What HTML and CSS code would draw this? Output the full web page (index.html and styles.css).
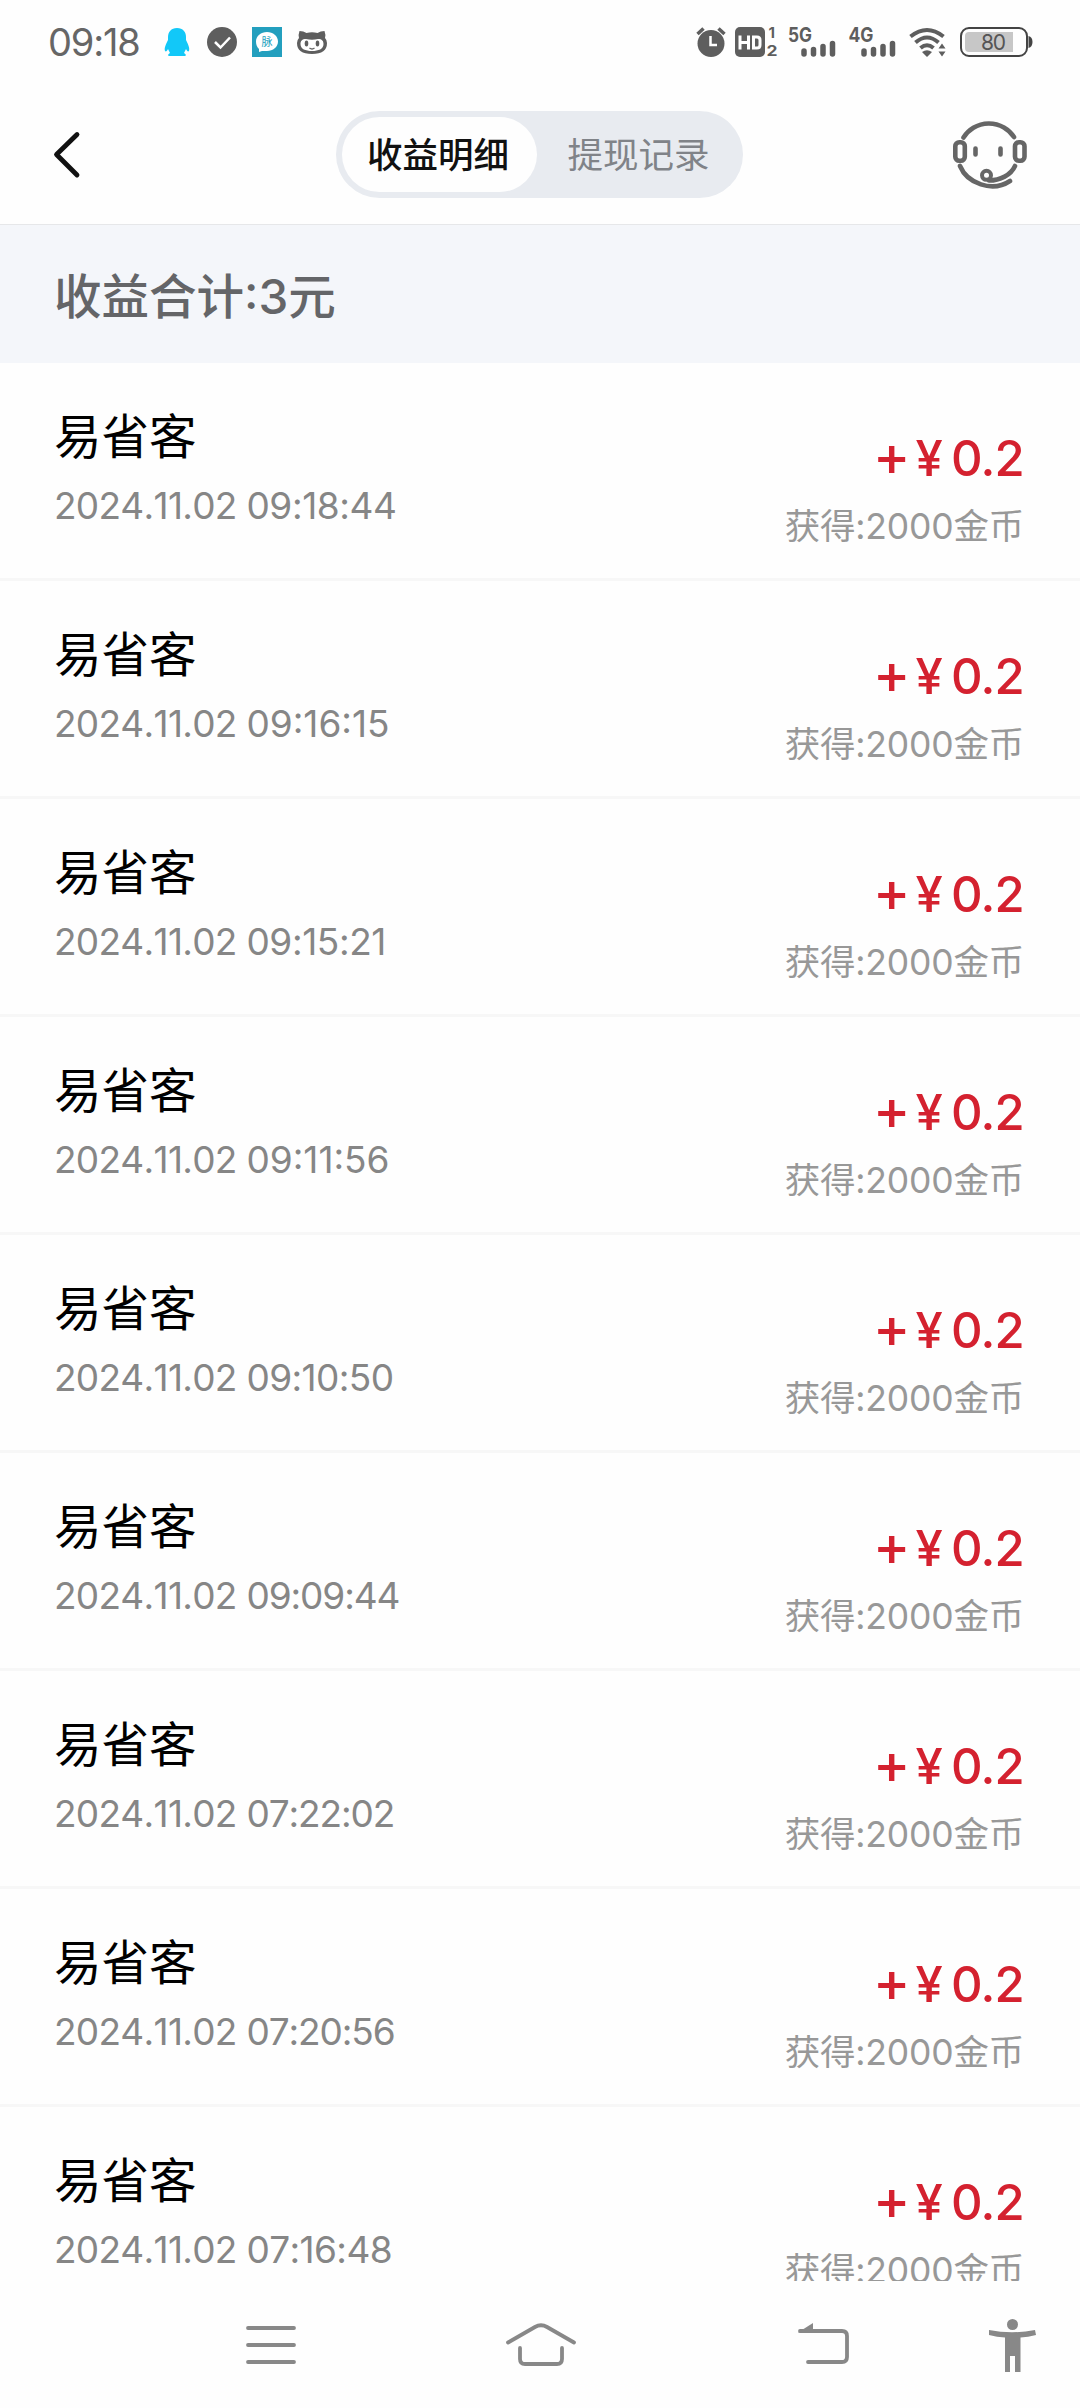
FILE: index.html
```html
<!DOCTYPE html>
<html lang="zh-CN">
<head>
<meta charset="utf-8">
<title>收益明细</title>
<link rel="stylesheet" href="styles.css">
</head>
<body>
<div class="screen">
  <div class="status">
    <span class="clock">09:18</span>
    <svg class="notices" width="163" height="30" viewBox="164 27 163 30">
      <path fill="#12c8f8" d="M177 28c-6 0-9 4-9 9v3c-2 4-4 8-3 11 1 1 2 0 3-2l2 4c-2 1-3 3 0 3h14c3 0 2-2 0-3l2-4c1 2 2 3 3 2 1-3-1-7-3-11v-3c0-5-3-9-9-9z"/>
      <circle cx="222" cy="42" r="15" fill="#5e5e5e"/>
      <path d="M215 42l5.500 5.500 9.500-10" fill="none" stroke="#fff" stroke-width="2.500"/>
      <path fill="#239fbe" d="M252 27h30v30h-30z"/>
      <path fill="#fff" d="M267 32c6 0 11 4 11 9.500s-5 9.500-11 9.500c-2 0-4 0-5 0l-3 1v-3c-2-2-3-4-3-7.500 0-5.500 5-9.500 11-9.500z"/>
      <text class="badge-char" x="261.500" y="46">脉</text>
      <path fill="#5e5e5e" d="M299.500 31q4 0 7 2 5.500-1.500 11 0 3-2 7-2 1.500 4 .5 7 2 2 2 5 0 11-15 11t-15-11q0-3 2-5-1-3 .5-7z"/>
      <path fill="#fff" d="M306 39q6 1.500 12 0c4 0 5.500 2 5.500 5 0 5-5 7-11.500 7s-11.500-2-11.500-7c0-3 1.500-5 5.500-5z"/>
      <ellipse cx="306.500" cy="43.500" rx="1.800" ry="3" fill="#5e5e5e"/><ellipse cx="317.500" cy="43.500" rx="1.800" ry="3" fill="#5e5e5e"/>
      <path d="M309.500 48q2.500 2 5 0" fill="none" stroke="#5e5e5e" stroke-width="1.300"/>
    </svg>
    <svg class="system" width="338" height="32" viewBox="695 26 338 32" fill="#5e5e5e">
      <circle cx="711" cy="43.500" r="13.500"/>
      <path d="M697.500 34l6-5.500M718.500 28.500l6 5.500" stroke="#5e5e5e" stroke-width="3.500"/>
      <path d="M710.500 36v9h6.500" fill="none" stroke="#fff" stroke-width="2.500"/>
      <rect x="735" y="27" width="30" height="30" rx="5"/>
      <path d="M740 35.500v14M748.500 35.500v14M740 42.500h8.500M753.500 37h3.500q3 0 3 3v5q0 3-3 3h-3.500z" fill="none" stroke="#fff" stroke-width="3"/>
      <text class="net" x="768.500" y="38" font-size="15">1</text><text class="net" x="766.500" y="56" font-size="15" textLength="11" lengthAdjust="spacingAndGlyphs">2</text>
      <text class="net" x="788" y="41.500" font-size="20" textLength="24" lengthAdjust="spacingAndGlyphs">5G</text>
      <path d="M804 51v3M813.500 49.500v4.500M823 46.500v7.500M832.500 43.500v10.500" stroke="#5e5e5e" stroke-width="5.500" stroke-linecap="round"/>
      <text class="net" x="848.500" y="41.500" font-size="20" textLength="25" lengthAdjust="spacingAndGlyphs">4G</text>
      <path d="M864 51v3M873.500 49.500v4.500M883 46.500v7.500M892.500 43.500v10.500" stroke="#5e5e5e" stroke-width="5.500" stroke-linecap="round"/>
      <path d="M910.500 36.500Q927 23.500 943.500 36.500M915.500 42.500Q927 32.500 938.500 42.500M920.500 48Q927 42.500 933.500 48" fill="none" stroke="#5e5e5e" stroke-width="4"/>
      <path d="M922 52q5-3.500 10 0l-5 5zM942 43.500l3.500 5h-7zM942 56.500l3.500-5h-7z"/>
      <rect x="961" y="28" width="66" height="28" rx="8" fill="none" stroke="#444" stroke-width="2"/>
      <path fill="#c7c7c7" d="M969 32h44v20h-44q-4 0-4-4V36q0-4 4-4z"/>
      <path fill="#444" d="M1028.500 36q4 1 4 6t-4 6z"/>
      <text class="charge" x="981" y="49.500" textLength="25">80</text>
    </svg>
  </div>

  <header class="header">
    <svg width="32" height="50" viewBox="50 130 32 50"><path d="M77 134.500L56.500 154.500 77 175" fill="none" stroke="#111" stroke-width="4.800" stroke-linecap="round" stroke-linejoin="round"/></svg>
    <nav class="tabs"><span class="tab active">收益明细</span><span class="tab">提现记录</span></nav>
    <svg width="78" height="74" viewBox="950 117 78 74" fill="none" stroke="#666" stroke-width="4.600" stroke-linecap="round">
      <path d="M963.500 136.500a30 30 0 0 1 50.500-.5M960 165c7 17 32 27 50 15M1015 165c-4 9-15 14.500-26 14.500"/>
      <rect x="955.300" y="141.300" width="9.500" height="18.500" rx="4"/>
      <rect x="1015" y="141.300" width="9.500" height="18.500" rx="4"/>
      <path d="M975.500 147.500v6M1000.500 147.500v6"/>
      <circle cx="986.500" cy="174.300" r="4.500" stroke-width="4"/>
    </svg>
  </header>

  <section class="summary">收益合计:3元</section>

  <main class="list">
    <article class="row"><div class="info"><h2>易省客</h2><time>2024.11.02 <span class="loose">09:18:44</span></time></div><div class="gain"><div class="amount"><span class="plus">+</span><span class="yen">¥</span><span>0.2</span></div><p>获得:2000金币</p></div></article>
    <article class="row"><div class="info"><h2>易省客</h2><time>2024.11.02 <span class="looser">09:16:15</span></time></div><div class="gain"><div class="amount"><span class="plus">+</span><span class="yen">¥</span><span>0.2</span></div><p>获得:2000金币</p></div></article>
    <article class="row"><div class="info"><h2>易省客</h2><time>2024.11.02 <span class="loose">09:15:21</span></time></div><div class="gain"><div class="amount"><span class="plus">+</span><span class="yen">¥</span><span>0.2</span></div><p>获得:2000金币</p></div></article>
    <article class="row"><div class="info"><h2>易省客</h2><time>2024.11.02 <span class="looser">09:11:56</span></time></div><div class="gain"><div class="amount"><span class="plus">+</span><span class="yen">¥</span><span>0.2</span></div><p>获得:2000金币</p></div></article>
    <article class="row"><div class="info"><h2>易省客</h2><time>2024.11.02 <span class="normal">09:10:50</span></time></div><div class="gain"><div class="amount"><span class="plus">+</span><span class="yen">¥</span><span>0.2</span></div><p>获得:2000金币</p></div></article>
    <article class="row"><div class="info"><h2>易省客</h2><time>2024.11.02 <span class="tight">09:09:44</span></time></div><div class="gain"><div class="amount"><span class="plus">+</span><span class="yen">¥</span><span>0.2</span></div><p>获得:2000金币</p></div></article>
    <article class="row"><div class="info"><h2>易省客</h2><time>2024.11.02 <span class="tight">07:22:02</span></time></div><div class="gain"><div class="amount"><span class="plus">+</span><span class="yen">¥</span><span>0.2</span></div><p>获得:2000金币</p></div></article>
    <article class="row"><div class="info"><h2>易省客</h2><time>2024.11.02 <span class="tight">07:20:56</span></time></div><div class="gain"><div class="amount"><span class="plus">+</span><span class="yen">¥</span><span>0.2</span></div><p>获得:2000金币</p></div></article>
    <article class="row"><div class="info"><h2>易省客</h2><time>2024.11.02 <span class="normal">07:16:48</span></time></div><div class="gain"><div class="amount"><span class="plus">+</span><span class="yen">¥</span><span>0.2</span></div><p>获得:2000金币</p></div></article>
  </main>

  <footer class="navbar">
    <svg width="1080" height="127" viewBox="0 2281 1080 127" fill="none" stroke="#888" stroke-width="3.800" stroke-linecap="round" stroke-linejoin="round">
      <path d="M248 2328h46M248 2345h46M248 2362h46"/>
      <path d="M508 2342.500l27-15.500q6-3.500 12 0l27 15.500M520 2348v11q0 5 5 5h32q5 0 5-5v-11"/>
      <path d="M808 2362h34q5 0 5-5v-21q0-5-5-5h-42"/>
      <path d="M798 2332.500l15-9.500v9.500z" fill="#888" stroke="none"/>
      <g fill="#888" stroke="none"><circle cx="1012.500" cy="2324.500" r="5.500"/><path d="M989 2330q23 4.500 46 0l1 5q-8 2-15.500 2.500V2372H1015v-16h-5v16h-5v-34.500q-8-.5-16-2.500z"/></g>
    </svg>
  </footer>
</div>
</body>
</html>
```
FILE: styles.css
```css
* { box-sizing: border-box; margin: 0; padding: 0; }
body { background: #fff; font-family: Inter, "Noto Sans CJK SC", sans-serif; }
svg { display: block; flex: none; overflow: visible; }
.screen { width: 1080px; height: 2408px; display: flex; flex-direction: column; overflow: hidden; background: #fefefe; }
.status { height: 84px; flex: none; display: flex; align-items: center; padding: 0 47px 0 48px; }
.clock { width: 116px; font-size: 38px; line-height: 84px; color: #666; letter-spacing: -1.2px; }
.system { margin-left: auto; }
.badge-char { font-size: 11px; fill: #239fbe; }
.net { font-weight: 700; }
.charge { font-size: 21px; fill: #555; }

.header { height: 140px; flex: none; display: grid; grid-template-columns: 1fr auto 1fr; align-items: center; padding: 2px 52px 0 50px; }
.header > svg:last-child { justify-self: end; }
.tabs { display: flex; width: 407px; height: 87px; padding: 6px; border-radius: 44px; background: #e8ebf0; margin-top: -1px; }
.tab { flex: 1; border-radius: 38px; padding-left: 4px; text-align: center; font-size: 35.500px; line-height: 78px; color: #808388; }
.tab.active { flex: 0 0 195px; padding: 0 2px 0 0; background: #fefefe; color: #111; font-weight: 500; }

.summary { height: 139px; flex: none; padding-left: 54px; line-height: 143px; font-size: 47.500px; font-weight: 500; color: #646568; background: #f4f6fa; border-top: 1px solid #e6e7e9; }

.list { height: 1918px; flex: none; overflow: hidden; }
.row { height: 218px; display: flex; justify-content: space-between; padding: 0 56px 0 54px; border-bottom: 3px solid #f7f7f7; }
.info { padding-top: 39px; }
.info h2 { font-size: 47.500px; line-height: 70px; font-weight: 400; color: #000; }
.info time { display: block; font-size: 37px; line-height: 67px; font-weight: 400; font-kerning: none; letter-spacing: -0.7px; color: #868686; white-space: nowrap; }
.looser { letter-spacing: 0; }
.loose { letter-spacing: -0.4px; }
.normal { letter-spacing: -0.6px; }
.tight { letter-spacing: -1.1px; }
.gain { padding-top: 61px; }
.amount { display: flex; justify-content: flex-end; font-size: 49px; line-height: 70px; height: 70px; font-weight: 500; color: #d4212f; letter-spacing: -0.8px; }
.plus { font-size: 56px; line-height: 65px; margin-right: 6px; }
.yen { margin-right: 9px; }
.gain p { font-size: 35.500px; line-height: 66px; font-weight: 400; letter-spacing: -0.2px; color: #989898; text-align: right; white-space: nowrap; }
.navbar { height: 127px; flex: none; }
```
